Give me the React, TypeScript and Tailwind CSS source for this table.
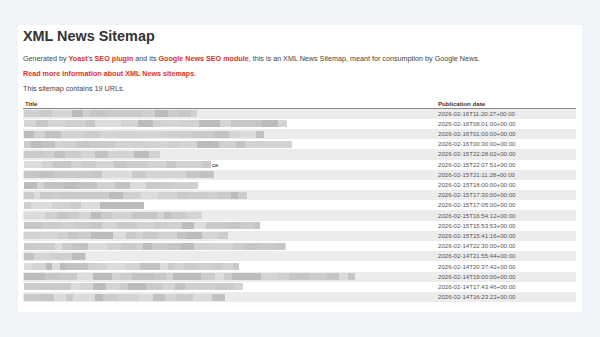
import React from "react";

const dates = [
  "2026-02-16T11:20:27+00:00",
  "2026-02-16T08:01:00+00:00",
  "2026-02-16T01:00:00+00:00",
  "2026-02-16T00:30:00+00:00",
  "2026-02-15T22:28:02+00:00",
  "2026-02-15T22:07:51+00:00",
  "2026-02-15T21:11:28+00:00",
  "2026-02-15T18:00:00+00:00",
  "2026-02-15T17:30:00+00:00",
  "2026-02-15T17:05:00+00:00",
  "2026-02-15T16:54:12+00:00",
  "2026-02-15T15:53:53+00:00",
  "2026-02-15T15:41:16+00:00",
  "2026-02-14T22:30:00+00:00",
  "2026-02-14T21:55:44+00:00",
  "2026-02-14T20:37:42+00:00",
  "2026-02-14T19:00:00+00:00",
  "2026-02-14T17:43:46+00:00",
  "2026-02-14T16:23:22+00:00",
];

// end x of blurred title
const ends = [197, 287, 264, 292, 160, 211, 214, 198, 247, 144, 202, 260, 228, 286, 86, 239, 355, 243, 225];

const shades = ["#cacaca", "#d0d0d0", "#c2c2c2", "#d4d4d4", "#c6c6c6", "#bcbcbc", "#d2d2d2", "#cccccc"];

function rng(seed: number) {
  let s = seed * 9301 + 49297;
  return () => {
    s = (s * 9301 + 49297) % 233280;
    return s / 233280;
  };
}

function segments(i: number, width: number) {
  const r = rng(i + 7);
  const segs: { w: number; c: string }[] = [];
  let total = 0;
  while (total < width) {
    let w = Math.round(6 + r() * 16);
    if (total + w > width) w = width - total;
    const gap = r() < 0.1;
    segs.push({ w, c: gap ? "#dcdcdc" : shades[Math.floor(r() * shades.length)] });
    total += w;
  }
  return segs;
}

export default function App() {
  return (
    <div
      className="w-[600px] h-[337px] bg-[#f0f3f8] pt-[25px] pl-[18px] overflow-hidden"
      style={{ fontFamily: '"Liberation Sans", Arial, sans-serif' }}
    >
      <div className="w-[564px] h-[287px] bg-white pl-[5px] pr-[6px] pt-[3px]">
        <h1 className="text-[14.4px] leading-[16px] font-bold text-[#333]">XML News Sitemap</h1>
        <p className="mt-[10.6px] text-[7.2px] leading-[8px] text-[#444]">
          Generated by <a className="font-bold text-[#e0301e]">Yoast</a>'s{" "}
          <a className="font-bold text-[#e0301e]">SEO plugin</a> and its{" "}
          <a className="font-bold text-[#e0301e]">Google News SEO module</a>, this is an XML News Sitemap, meant
          for consumption by Google News.
        </p>
        <p className="mt-[7px] text-[7.2px] leading-[8px] text-[#444]">
          <a className="font-bold text-[#e0301e]">Read more information about XML News sitemaps</a>.
        </p>
        <p className="mt-[7px] text-[7.2px] leading-[8px] text-[#444]">This sitemap contains 19 URLs.</p>
        <div className="mt-[7px] w-[553px]">
          <div className="flex h-[9px] border-b border-[#888] text-[6.1px] leading-[8px] font-bold text-[#333]">
            <div className="w-[415px] pl-[2px]">Title</div>
            <div className="flex-1">Publication date</div>
          </div>
          {dates.map((d, i) => (
            <div
              key={d}
              className={`flex h-[10.2px] items-center text-[6.1px] leading-[8px] text-[#555] ${
                i % 2 === 0 ? "bg-[#ececec]" : "bg-white"
              }`}
            >
              <div className="w-[415px] pl-[1px] flex items-center">
                <div className="flex h-[7px] blur-[0.5px]">
                  {segments(i, ends[i] - 24).map((s, k) => (
                    <div key={k} style={{ width: s.w, background: s.c }} />
                  ))}
                </div>
                {i === 5 && <span className="ml-[1px] text-[#222]">ce</span>}
              </div>
              <div className="flex-1">{d}</div>
            </div>
          ))}
        </div>
      </div>
    </div>
  );
}
